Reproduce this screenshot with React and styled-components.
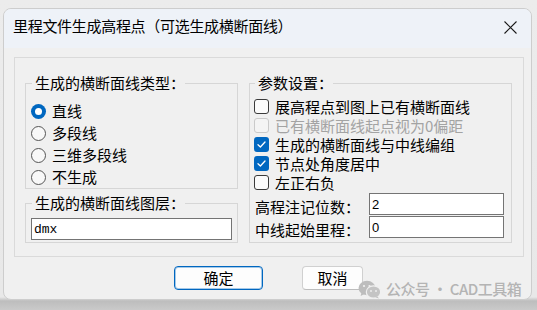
import React from "react";
import styled, { createGlobalStyle } from "styled-components";

const Global = createGlobalStyle`
  html, body { margin: 0; padding: 0; }
  body { font-family: "Noto Sans CJK SC", "Noto Sans", sans-serif; color: #000; }
  * { box-sizing: border-box; }
`;

const Screen = styled.div`
  position: relative;
  width: 537px;
  height: 310px;
  overflow: hidden;
  padding: 8px 0 0 3px;
  background: linear-gradient(to bottom, #ececec 0, #e8e8e8 297px, #bdbdbd 301px, #cacaca 310px);
`;

const Dialog = styled.div`
  width: 529px;
  height: 292px;
  background: #f0f0f0;
  border: 1px solid #cdcdcd;
  border-radius: 8px;
  overflow: hidden;
  display: flex;
  flex-direction: column;
`;

const TitleBar = styled.div`
  height: 39px;
  flex: none;
  background: #eef2f8;
  display: flex;
  justify-content: space-between;
  align-items: flex-start;
  padding: 7px 14px 0 9px;
`;

const Title = styled.div`
  font-size: 15px;
  line-height: 20px;
  letter-spacing: -0.3px;
`;

const Close = styled.svg`
  margin-top: 5px;
  display: block;
`;

const Body = styled.div`
  flex: 1;
  display: flex;
  flex-direction: column;
  padding: 9px 7px 0 10px;
`;

const Panel = styled.div`
  height: 200px;
  border: 1px solid #dadada;
  padding: 15px 11px 13px 10px;
  display: grid;
  grid-template-columns: 213px 263px;
  column-gap: 11px;
`;

const Column = styled.div`
  display: flex;
  flex-direction: column;
  gap: 4px;
`;

const Group = styled.fieldset`
  margin: 0;
  min-width: 0;
  border: 1px solid #d6d6d6;
  padding: ${(p) => p.$pad};
  display: flex;
  flex-direction: column;
  flex: ${(p) => (p.$grow ? 1 : "none")};
`;

const Legend = styled.legend`
  font-size: 15px;
  line-height: 20px;
  padding: 0 0 0 3px;
  margin-left: 1px;
`;

const RadioRow = styled.div`
  height: 22px;
  display: flex;
  align-items: center;
  gap: 6px;
  font-size: 15px;
  line-height: 20px;
`;

const RadioDot = styled.span`
  width: 15px;
  height: 15px;
  border-radius: 50%;
  flex: none;
  display: flex;
  align-items: center;
  justify-content: center;
  background: ${(p) => (p.$on ? "#0067c0" : "#f8f8f8")};
  border: ${(p) => (p.$on ? "none" : "1px solid #555")};
  &::after {
    content: "";
    display: ${(p) => (p.$on ? "block" : "none")};
    width: 7px;
    height: 7px;
    border-radius: 50%;
    background: #fff;
  }
`;

const CheckRow = styled.div`
  height: 19px;
  display: flex;
  align-items: center;
  gap: 6px;
  font-size: 15px;
  line-height: 19px;
  color: ${(p) => (p.$disabled ? "#a3a3a3" : "#000")};
`;

const Box = styled.span`
  width: 15px;
  height: 15px;
  flex: none;
  border-radius: 3px;
  display: flex;
  align-items: center;
  justify-content: center;
  background: ${(p) => (p.$on ? "#0067c0" : p.$disabled ? "#f4f4f4" : "#fbfbfb")};
  border: ${(p) => (p.$on ? "none" : p.$disabled ? "1px solid #cacaca" : "1px solid #3a3a3a")};
`;

const Field = styled.input`
  display: block;
  width: ${(p) => p.$w || "100%"};
  height: 22px;
  border: 1px solid #747474;
  background: #fff;
  padding: 0 2px;
  margin: 0;
  outline: none;
  color: #000;
  font-family: ${(p) => (p.$mono ? '"Liberation Mono", monospace' : '"Liberation Sans", sans-serif')};
  font-size: 13px;
`;

const FormGrid = styled.div`
  margin-top: 1px;
  display: grid;
  grid-template-columns: 115px 135px;
  row-gap: 1px;
`;

const FormLabel = styled.div`
  height: 22px;
  padding: 4px 0 0 1px;
  font-size: 15px;
  line-height: 20px;
  white-space: nowrap;
`;

const ButtonRow = styled.div`
  display: flex;
  gap: 39px;
  padding: 9px 0 0 160px;
`;

const Button = styled.button`
  width: ${(p) => p.$w};
  height: 24px;
  margin: 0;
  padding: 0;
  border-radius: 4px;
  font-family: "Noto Sans CJK SC", sans-serif;
  font-size: 15px;
  line-height: 20px;
  color: #000;
  background: #fdfdfd;
  border: 1px solid ${(p) => (p.$primary ? "#0067c0" : "#d0d0d0")};
  border-bottom-color: ${(p) => (p.$primary ? "#0067c0" : "#bdbdbd")};
  box-shadow: ${(p) => (p.$primary ? "inset 0 0 0 1px rgba(0,103,192,0.35)" : "none")};
`;

const Watermark = styled.div`
  position: absolute;
  left: 358px;
  top: 279px;
  display: flex;
  align-items: center;
  gap: 5px;
  white-space: nowrap;
  color: #b4b4b4;
  font-size: 15px;
  font-weight: 500;
  line-height: 20px;
  letter-spacing: -0.5px;
  font-family: "Noto Sans CJK SC", sans-serif;
`;

const Check = () => (
  <svg width="11" height="11" viewBox="0 0 11 11">
    <path d="M2 5.8 L4.4 8 L9 3" fill="none" stroke="#fff" strokeWidth="1.3" strokeLinecap="round" strokeLinejoin="round" />
  </svg>
);

const radios = [
  { t: "直线", on: true },
  { t: "多段线" },
  { t: "三维多段线" },
  { t: "不生成" },
];

const checks = [
  { t: "展高程点到图上已有横断面线" },
  { t: "已有横断面线起点视为0偏距", disabled: true },
  { t: "生成的横断面线与中线编组", on: true },
  { t: "节点处角度居中", on: true },
  { t: "左正右负" },
];

export default function App() {
  return (
    <>
      <Global />
      <Screen>
        <Dialog>
          <TitleBar>
            <Title>里程文件生成高程点（可选生成横断面线）</Title>
            <Close width="13" height="13" viewBox="0 0 13 13">
              <path d="M0.5 0.5 L12.5 12.5 M12.5 0.5 L0.5 12.5" stroke="#1b1b1b" strokeWidth="1.1" />
            </Close>
          </TitleBar>
          <Body>
            <Panel>
              <Column>
                <Group $pad="7px 5px 0 5px">
                  <Legend>生成的横断面线类型：</Legend>
                  {radios.map((r) => (
                    <RadioRow key={r.t}>
                      <RadioDot $on={r.on} />
                      {r.t}
                    </RadioRow>
                  ))}
                </Group>
                <Group $pad="5px 5px 2px 5px">
                  <Legend>生成的横断面线图层：</Legend>
                  <Field $mono readOnly value="dmx" />
                </Group>
              </Column>
              <Group $grow $pad="4px 6px 4px 4px">
                <Legend>参数设置：</Legend>
                {checks.map((c) => (
                  <CheckRow key={c.t} $disabled={c.disabled}>
                    <Box $on={c.on} $disabled={c.disabled}>{c.on && <Check />}</Box>
                    {c.t}
                  </CheckRow>
                ))}
                <FormGrid>
                  <FormLabel>高程注记位数：</FormLabel>
                  <Field readOnly value="2" />
                  <FormLabel>中线起始里程：</FormLabel>
                  <Field readOnly value="0" />
                </FormGrid>
              </Group>
            </Panel>
            <ButtonRow>
              <Button $primary $w="89px">确定</Button>
              <Button $w="61px">取消</Button>
            </ButtonRow>
          </Body>
        </Dialog>
        <Watermark>
          <svg width="23" height="19" viewBox="0 0 23 19">
            <ellipse cx="9" cy="8" rx="8.5" ry="7.2" fill="#bdbdbd" />
            <path d="M3.5 12.5 L2.6 16 L6.5 14 Z" fill="#bdbdbd" />
            <ellipse cx="15.5" cy="12" rx="7.2" ry="6.2" fill="#c4c4c4" stroke="#f0f0f0" strokeWidth="1.2" />
            <path d="M19.5 16.5 L21 18.6 L17.5 17.4 Z" fill="#c4c4c4" />
            <circle cx="6" cy="6" r="1.1" fill="#f0f0f0" />
            <circle cx="11.5" cy="6" r="1.1" fill="#f0f0f0" />
            <circle cx="13" cy="11" r="0.9" fill="#f0f0f0" />
            <circle cx="18" cy="11" r="0.9" fill="#f0f0f0" />
          </svg>
          <span>公众号 · CAD工具箱</span>
        </Watermark>
      </Screen>
    </>
  );
}
